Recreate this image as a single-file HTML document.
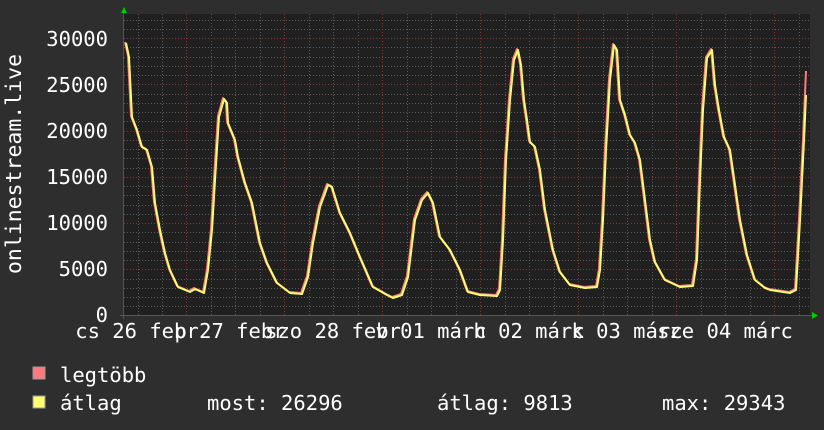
<!DOCTYPE html>
<html><head><meta charset="utf-8"><style>
html,body{margin:0;padding:0;background:#2e2e2e;}
svg{display:block}
text{font-family:"DejaVu Sans Mono","Liberation Mono",monospace;fill:#fff;font-size:20.5px}
</style></head><body>
<svg width="824" height="430" viewBox="0 0 824 430" xmlns="http://www.w3.org/2000/svg">
<rect width="824" height="430" fill="#2e2e2e"/>
<rect x="124" y="14" width="686" height="302" fill="#202020"/>
<g stroke="#5a5a5a" stroke-width="1" stroke-dasharray="1,2">
<path d="M124 306.5H810M124 297.5H810M124 288.5H810M124 279.5H810M124 260.5H810M124 251.5H810M124 242.5H810M124 232.5H810M124 214.5H810M124 205.5H810M124 195.5H810M124 186.5H810M124 168.5H810M124 158.5H810M124 149.5H810M124 140.5H810M124 121.5H810M124 112.5H810M124 103.5H810M124 94.5H810M124 75.5H810M124 66.5H810M124 57.5H810M124 47.5H810M124 29.5H810M124 20.5H810"/>
<path d="M138.5 14V316M162.5 14V316M211.5 14V316M235.5 14V316M260.5 14V316M309.5 14V316M333.5 14V316M358.5 14V316M407.5 14V316M431.5 14V316M456.5 14V316M505.5 14V316M529.5 14V316M554.5 14V316M603.5 14V316M627.5 14V316M652.5 14V316M701.5 14V316M725.5 14V316M750.5 14V316M799.5 14V316"/>
</g>
<g stroke="#7a3a3a" stroke-width="1" stroke-dasharray="1,2">
<path d="M124 269.5H810M124 223.5H810M124 177.5H810M124 131.5H810M124 84.5H810M124 38.5H810"/>
<path d="M186.5 14V316M284.5 14V316M382.5 14V316M480.5 14V316M578.5 14V316M676.5 14V316M774.5 14V316"/>
</g>
<path d="M120 315.5H814M123.5 12V319" stroke="#555" stroke-width="1"/>
<polygon points="121,13 127,13 124,7" fill="#0c0"/>
<polygon points="812,312 812,319 818,315.5" fill="#0c0"/>
<g fill="none" stroke-linejoin="round" stroke-width="2">
<polyline stroke="#ff7a80" transform="translate(-1,-1)" points="126,43 129,57 132,117 137,130 142,147 147,150 152,167 155,203 160,230 165,253 170,270 178,287 190,292 195,289 204,293 208,270 212,230 215,180 219,117 224,99 227,103 228,123 235,140 238,157 245,183 252,203 260,243 267,263 277,283 290,293 302,294 308,277 313,243 320,207 328,185 332,187 340,213 350,233 360,257 373,287 387,295 393,298 402,295 408,277 415,220 422,200 428,193 433,203 440,237 450,250 460,270 468,292 480,295 497,296 500,290 503,240 506,160 510,100 514,60 518,50 521,65 524,100 527,120 530,142 535,147 540,170 545,210 553,250 560,272 570,285 585,288 597,287 600,270 603,220 606,150 610,80 614,45 617,50 620,100 625,115 630,135 635,143 640,160 645,200 650,240 655,262 665,280 680,287 693,286 697,260 700,180 703,110 707,58 712,50 715,85 719,110 724,137 730,150 735,185 740,220 747,255 755,280 765,288 770,290 790,293 796,290 800,220 804,140 807,72"/>
<polyline stroke="#ffff70" points="126,43 129,57 132,117 137,130 142,147 147,150 152,167 155,203 160,230 165,253 170,270 178,287 190,292 195,289 204,293 208,270 212,230 215,180 219,117 224,99 227,103 228,123 235,140 238,157 245,183 252,203 260,243 267,263 277,283 290,293 302,294 308,277 313,243 320,207 328,185 332,187 340,213 350,233 360,257 373,287 387,295 393,298 402,295 408,277 415,220 422,200 428,193 433,203 440,237 450,250 460,270 468,292 480,295 497,296 500,290 503,240 506,160 510,100 514,60 518,50 521,65 524,100 527,120 530,142 535,147 540,170 545,210 553,250 560,272 570,285 585,288 597,287 600,270 603,220 606,150 610,80 614,45 617,50 620,100 625,115 630,135 635,143 640,160 645,200 650,240 655,262 665,280 680,287 693,286 697,260 700,180 703,110 707,58 712,50 715,85 719,110 724,137 730,150 735,185 740,220 747,255 755,280 765,288 770,290 790,293 796,290 800,220 804,140 806,95"/>
</g>
<g text-anchor="end">
<text x="108" y="46">30000</text>
<text x="108" y="92">25000</text>
<text x="108" y="138">20000</text>
<text x="108" y="184">15000</text>
<text x="108" y="230">10000</text>
<text x="108" y="276">5000</text>
<text x="108" y="322">0</text>
</g>
<text transform="translate(21,164) rotate(-90)" text-anchor="middle" style="font-size:21.5px">onlinestream.live</text>
<g text-anchor="middle">
<text x="137" y="338">cs 26 febr</text>
<text x="230" y="338">p 27 febr</text>
<text x="333" y="338">szo 28 febr</text>
<text x="431" y="338">v 01 márc</text>
<text x="529" y="338">h 02 márc</text>
<text x="627" y="338">k 03 márc</text>
<text x="725" y="338">sze 04 márc</text>
</g>
<rect x="33" y="367" width="12" height="12" fill="#ff7a80" stroke="#999" stroke-width="1"/>
<rect x="33" y="396" width="12" height="12" fill="#ffff70" stroke="#999" stroke-width="1"/>
<text x="60" y="382">legtöbb</text>
<text x="60" y="410">átlag</text>
<text x="207" y="410">most: 26296</text>
<text x="437" y="410">átlag: 9813</text>
<text x="662" y="410">max: 29343</text>
</svg>
</body></html>
